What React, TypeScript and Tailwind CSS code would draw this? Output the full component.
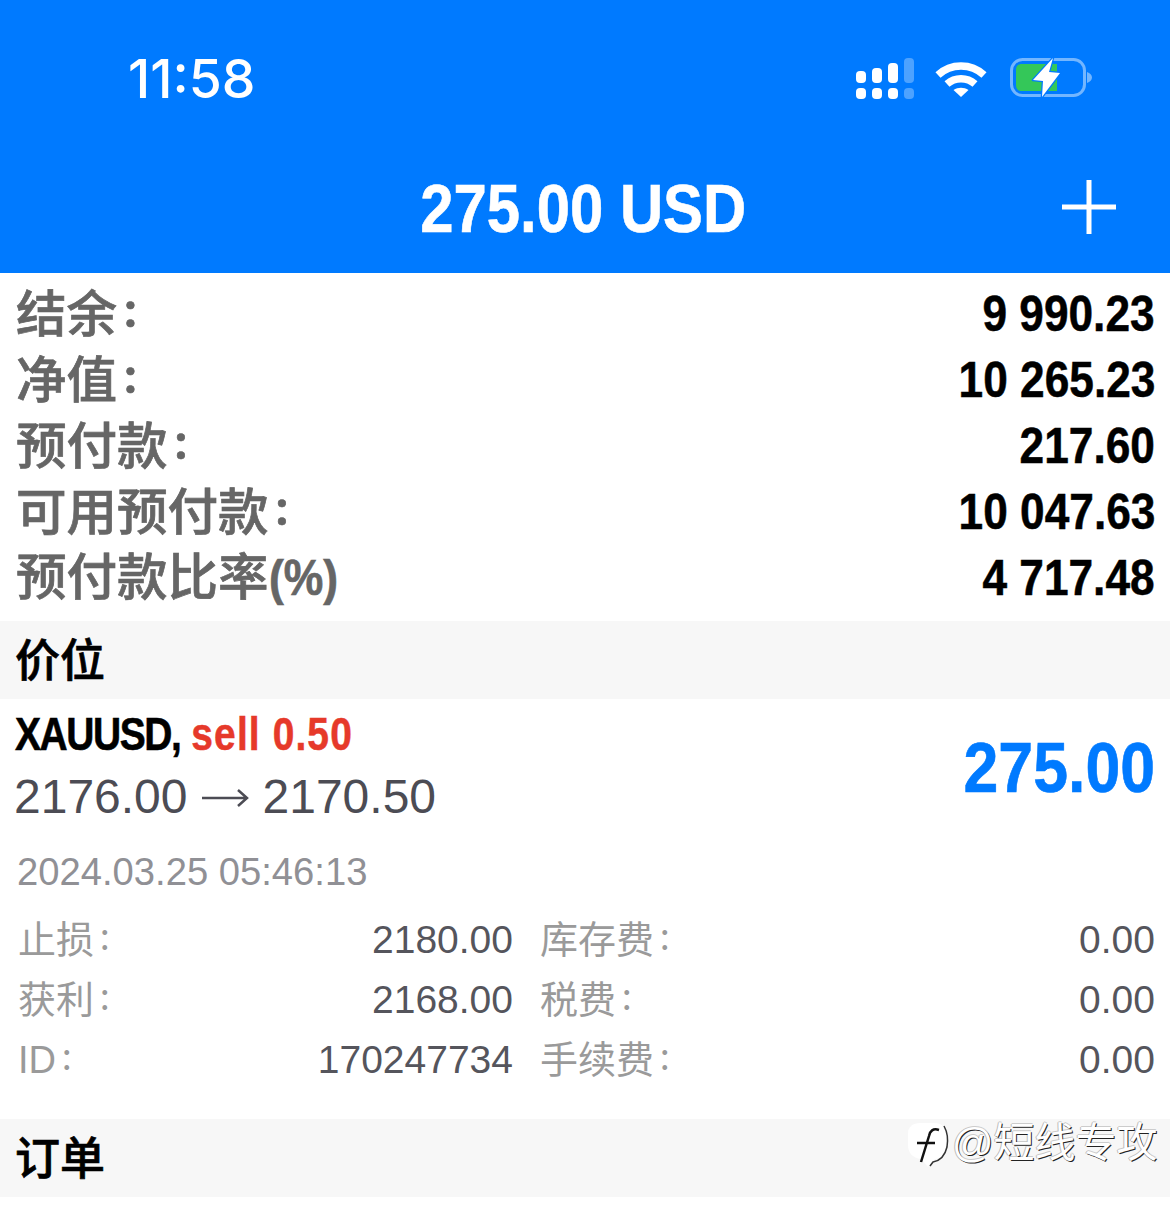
const cjk = "font-['Liberation_Sans','Noto_Sans_CJK_SC',sans-serif]";

function SignalIcon() {
  return (
    <svg width="60" height="44" viewBox="0 0 60 44" fill="#fff">
      <rect x="0" y="15" width="10" height="12" rx="4" />
      <rect x="16" y="12" width="10" height="15" rx="4" />
      <rect x="32" y="7" width="10" height="20" rx="4" />
      <rect x="48" y="2" width="10" height="25" rx="4" fillOpacity="0.3" />
      <rect x="0" y="32" width="10" height="11" rx="4" />
      <rect x="16" y="32" width="10" height="11" rx="4" />
      <rect x="32" y="32" width="10" height="11" rx="4" />
      <rect x="48" y="32" width="10" height="11" rx="4" fillOpacity="0.3" />
    </svg>
  );
}

function WifiIcon() {
  return (
    <svg width="52" height="40" viewBox="0 0 52 40" fill="none" stroke="#fff" strokeWidth="7.5">
      <path d="M3 17 C16 5 36 5 49 17" />
      <path d="M12 26 C20 19 32 19 40 26" />
      <path d="M26 39 L18.5 32 C23 29 29 29 33.5 32 Z" fill="#fff" stroke="none" />
    </svg>
  );
}

function BatteryIcon() {
  return (
    <svg width="84" height="44" viewBox="0 0 84 44" fill="none">
      <rect x="1.5" y="3.5" width="73" height="36" rx="11" stroke="#fff" strokeOpacity="0.45" strokeWidth="3" />
      <path d="M77 16 C80 17 82 19 82 21.500 C82 24 80 26 77 27 Z" fill="#fff" fillOpacity="0.45" />
      <path d="M12 8 H47 V35 H12 C8 35 6 33 6 29 V14 C6 10 8 8 12 8 Z" fill="#34c759" />
      <path d="M43 2 L23 24 L33 25 L32 41 L50 17 L39 16 Z" fill="#fff" stroke="#007aff" strokeWidth="2.500" strokeLinejoin="round" paintOrder="stroke" />
    </svg>
  );
}

function Colon({ big }: { big?: boolean }) {
  return big ? (
    <span className="ml-[7px] inline-block -translate-y-[5px] font-['Lato',sans-serif] text-[50px] font-bold leading-none">:</span>
  ) : (
    <span className="ml-[6px] inline-block -translate-y-[3px] font-['Lato',sans-serif] text-[38px] leading-none">:</span>
  );
}

function SummaryRow({ label, suffix, value }: { label: string; suffix?: string; value: string }) {
  return (
    <div className="flex h-[66px] items-center justify-between pl-[16px] pr-[15px]">
      <span className={`${cjk} translate-y-[1px] text-[50.5px] font-medium leading-none text-[#666666] whitespace-nowrap [-webkit-text-stroke:0.7px_#666666]`}>
        {label}
        {suffix ? (
          <span className="inline-block origin-left scale-x-[0.88] font-bold">{suffix}</span>
        ) : (
          <Colon big />
        )}
      </span>
      <span className="inline-block origin-right translate-y-[1px] scale-x-[0.885] font-['Liberation_Sans',sans-serif] text-[50px] font-bold leading-none text-black whitespace-nowrap [-webkit-text-stroke:0.5px_#000]">
        {value}
      </span>
    </div>
  );
}

function SectionHeader({ title }: { title: string }) {
  return (
    <div className="flex h-[78px] items-center bg-[#f7f7f7] pl-[15px]">
      <span className={`${cjk} translate-y-[1px] text-[45px] font-medium leading-none text-black [-webkit-text-stroke:0.7px_#000]`}>{title}</span>
    </div>
  );
}

function Detail({ label, value }: { label: string; value: string }) {
  return (
    <div className="flex h-[60px] items-center justify-between">
      <span className={`${cjk} text-[38px] leading-none text-[#9a9a9a] whitespace-nowrap`}>
        {label}
        <Colon />
      </span>
      <span className="font-['Liberation_Sans',sans-serif] text-[39px] leading-none text-[#55555c] whitespace-nowrap">{value}</span>
    </div>
  );
}

export default function App() {
  return (
    <div className="relative h-[1208px] w-[1170px] overflow-hidden bg-white">
      <header className="h-[273px] bg-[#007aff] text-white">
        <div className="flex h-[156px] items-center justify-between pl-[128px] pr-[76px]">
          <span className="translate-y-[1px] font-['Inter',sans-serif] text-[53.5px] font-medium leading-none">11:58</span>
          <div className="flex items-center">
            <SignalIcon />
            <div className="ml-[19px]"><WifiIcon /></div>
            <div className="ml-[23px]"><BatteryIcon /></div>
          </div>
        </div>
        <div className="grid h-[104px] grid-cols-[1fr_auto_1fr] items-center pl-[50px] pr-[54px]">
          <span />
          <span className="inline-block scale-x-[0.88] font-['Liberation_Sans',sans-serif] text-[68px] font-bold leading-none whitespace-nowrap [-webkit-text-stroke:0.6px_#fff]">
            275.00 USD
          </span>
          <svg className="justify-self-end -translate-y-[1px]" width="54" height="54" viewBox="0 0 54 54" stroke="#fff" strokeWidth="5">
            <path d="M27 0 V54 M0 27 H54" />
          </svg>
        </div>
      </header>

      <section className="mt-[7px] mb-[11px]">
        <SummaryRow label="结余" value="9 990.23" />
        <SummaryRow label="净值" value="10 265.23" />
        <SummaryRow label="预付款" value="217.60" />
        <SummaryRow label="可用预付款" value="10 047.63" />
        <SummaryRow label="预付款比率" suffix="(%)" value="4 717.48" />
      </section>

      <SectionHeader title="价位" />

      <section className="h-[420px] pl-[15px] pr-[15px]">
        <div className="flex h-[140px] items-center justify-between">
          <div className="-translate-y-[6px]">
            <div className="h-[68px] origin-left scale-x-[0.847] font-['Liberation_Sans',sans-serif] text-[46px] font-bold leading-[68px] whitespace-nowrap">
              <span className="tracking-[-1.7px] text-black [-webkit-text-stroke:0.6px_#000]">XAUUSD, </span>
              <span className="ml-[2px] tracking-[1.3px] text-[#e6392a] [-webkit-text-stroke:0.5px_#e6392a]">sell 0.50</span>
            </div>
            <div className="-ml-[1px] flex h-[58px] items-center font-['Liberation_Sans',sans-serif] text-[48px] leading-[58px] text-[#4c4c54] whitespace-nowrap">
              <span>2176.00</span>
              <svg className="mx-[14px] mt-[2px]" width="47" height="18" viewBox="0 0 47 18" fill="none" stroke="#4c4c54" strokeWidth="2.500">
                <path d="M0 9 H45 M36 1 L45 9 L36 17" />
              </svg>
              <span>2170.50</span>
            </div>
          </div>
          <span className="inline-block origin-right -translate-y-[1px] scale-x-[0.895] font-['Liberation_Sans',sans-serif] text-[70px] font-bold leading-none text-[#007aff] [-webkit-text-stroke:0.6px_#007aff]">
            275.00
          </span>
        </div>
        <div className="mt-[11px] pl-[2px] font-['Liberation_Sans',sans-serif] text-[38.2px] leading-[44px] text-[#909095]">
          2024.03.25 05:46:13
        </div>
        <div className="mt-[15px] grid grid-cols-[495px_1fr] gap-x-[27px] pl-[3px]">
          <div>
            <Detail label="止损" value="2180.00" />
            <Detail label="获利" value="2168.00" />
            <Detail label="ID" value="170247734" />
          </div>
          <div>
            <Detail label="库存费" value="0.00" />
            <Detail label="税费" value="0.00" />
            <Detail label="手续费" value="0.00" />
          </div>
        </div>
      </section>

      <SectionHeader title="订单" />

      <div className="absolute left-[906px] top-[1119px] flex items-center">
        <svg width="46" height="52" viewBox="0 0 46 52">
          <path d="M14 4 H28 C37 4 41 10 41 18 V25 C41 34 36 39 29 40 L22 48 L15 40 C7 39 2 34 2 26 V14 C2 8 7 4 14 4 Z" fill="#fff" />
          <path d="M24 47 L27 43 Q38 41 41 28 Q43 16 38 7" fill="none" stroke="#333" strokeWidth="1.500" />
          <path d="M33 11 C27 9 24 12 23 17 L15 43 M11 24 H29" fill="none" stroke="#111" strokeWidth="2.500" />
        </svg>
        <span className={`${cjk} ml-[0px] -translate-y-[2px] text-[41px] leading-none text-white whitespace-nowrap [text-shadow:1px_1px_0_#222,-1px_0_0_#bbb,0_-1px_0_#ccc]`}>
          @短线专攻
        </span>
      </div>
    </div>
  );
}
